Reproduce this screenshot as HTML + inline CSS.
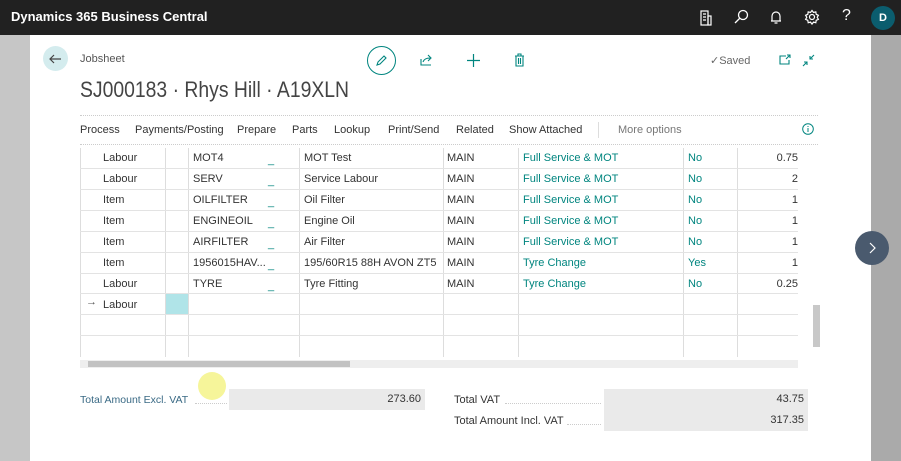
<!DOCTYPE html><html><head><style>
*{margin:0;padding:0;box-sizing:border-box}
body{width:901px;height:461px;overflow:hidden;background:#c6c6c6;font-family:"Segoe UI","Liberation Sans",sans-serif;font-size:11px;color:#333;position:relative}
.top{position:absolute;left:0;top:0;width:901px;height:35px;background:#212121;color:#fff}
.top .t{position:absolute;left:11px;top:9px;font-size:13px;font-weight:bold}
.card{position:absolute;left:30px;top:35px;width:841px;height:426px;background:#fff}
.rg{position:absolute;left:871px;top:35px;width:30px;height:426px;background:#aaa}
.a{position:absolute;white-space:nowrap}
.teal{color:#00857f}
.dot{position:absolute;border-top:1px dotted #ccc}
.vl{position:absolute;width:1px;background:#ddd}
.hl{position:absolute;height:1px;background:#e3e3e3;left:80px;width:718px}
</style></head><body>
<div class="top"><div class="t">Dynamics 365 Business Central</div>
<svg class="a" style="left:699px;top:10px" width="14" height="16" viewBox="0 0 14 16" fill="none" stroke="#fff" stroke-width="1.2"><rect x="2" y="1" width="7" height="14"/><rect x="9" y="6" width="3" height="9"/><path d="M4 4h3M4 7h3M4 10h3"/></svg>
<svg class="a" style="left:733px;top:9px" width="16" height="16" viewBox="0 0 16 16" fill="none" stroke="#fff" stroke-width="1.3"><circle cx="10" cy="6" r="4.5"/><path d="M7 9l-5 5"/></svg>
<svg class="a" style="left:769px;top:10px" width="14" height="15" viewBox="0 0 14 15" fill="none" stroke="#fff" stroke-width="1.2"><path d="M3 11V6a4 4 0 018 0v5H2h10M5.5 13h3"/></svg>
<svg class="a" style="left:804px;top:9px" width="16" height="16" viewBox="0 0 16 16" fill="none" stroke="#fff" stroke-width="1.2"><circle cx="8" cy="8" r="2.5"/><path d="M8 1.5l1.5 2 2.3-.6.4 2.4 2.2 1-1.2 2 1.2 2-2.2 1-.4 2.4-2.3-.6-1.5 2-1.5-2-2.3.6-.4-2.4-2.2-1 1.2-2-1.2-2 2.2-1 .4-2.4 2.3.6z"/></svg>
<div class="a" style="left:842px;top:7px;font-size:16px">?</div>
<div class="a" style="left:871px;top:6px;width:24px;height:24px;border-radius:50%;background:#0b5d6e;color:#fff;font-weight:bold;font-size:11px;text-align:center;line-height:24px">D</div>
</div>
<div class="card"></div><div class="rg"></div>
<div class="a" style="left:43px;top:46px;width:25px;height:25px;border-radius:50%;background:#d4ecee"></div>
<svg class="a" style="left:48px;top:52px" width="14" height="14" viewBox="0 0 14 14" fill="none" stroke="#444" stroke-width="1.2"><path d="M13 7H2M6 3L2 7l4 4"/></svg>
<div class="a" style="left:80px;top:53px;font-size:11px;color:#555">Jobsheet</div>
<div class="a" style="left:80px;top:77px;font-size:22px;color:#444;transform:scaleX(0.88);transform-origin:0 0">SJ000183 · Rhys Hill · A19XLN</div>
<div class="a" style="left:367px;top:46px;width:29px;height:29px;border-radius:50%;border:1px solid #00857f"></div>
<svg class="a" style="left:375px;top:54px" width="13" height="13" viewBox="0 0 13 13" fill="none" stroke="#00857f" stroke-width="1.1"><path d="M2 11l1-3 6-6 2 2-6 6z"/></svg>
<svg class="a" style="left:420px;top:54px" width="13" height="12" viewBox="0 0 13 12" fill="none" stroke="#00857f" stroke-width="1.1"><path d="M1 5v6h10M3 8c1-3 4-4 7-4M8 1l3 3-3 3"/></svg>
<svg class="a" style="left:467px;top:54px" width="13" height="13" viewBox="0 0 13 13" stroke="#00857f" stroke-width="1.2"><path d="M6.5 0v13M0 6.5h13"/></svg>
<svg class="a" style="left:514px;top:53px" width="11" height="14" viewBox="0 0 11 14" fill="none" stroke="#00857f" stroke-width="1.1"><path d="M1 3h9M4 3V1h3v2M2 3v10h7V3M4.5 5v6M6.5 5v6"/></svg>
<div class="a" style="left:710px;top:54px;color:#666">✓Saved</div>
<svg class="a" style="left:779px;top:54px" width="12" height="11" viewBox="0 0 12 11" fill="none" stroke="#00857f" stroke-width="1.1"><path d="M7 2H1v8h9V6M8 1h3v3M11 1L7 5"/></svg>
<svg class="a" style="left:802px;top:54px" width="13" height="13" viewBox="0 0 13 13" fill="none" stroke="#00857f" stroke-width="1.1"><path d="M1 12l4-4M2 8h3v3M12 1L8 5M8 2v3h3"/></svg>
<div class="dot" style="left:80px;top:115px;width:738px"></div>
<div class="a" style="left:80px;top:124px">Process</div>
<div class="a" style="left:135px;top:124px">Payments/Posting</div>
<div class="a" style="left:237px;top:124px">Prepare</div>
<div class="a" style="left:292px;top:124px">Parts</div>
<div class="a" style="left:334px;top:124px">Lookup</div>
<div class="a" style="left:388px;top:124px">Print/Send</div>
<div class="a" style="left:456px;top:124px">Related</div>
<div class="a" style="left:509px;top:124px">Show Attached</div>
<div class="vl" style="left:598px;top:122px;height:16px"></div>
<div class="a" style="left:618px;top:124px;color:#777">More options</div>
<svg class="a" style="left:802px;top:123px" width="12" height="12" viewBox="0 0 12 12" fill="none" stroke="#00857f" stroke-width="1"><circle cx="6" cy="6" r="5.3"/><path d="M6 5v4M6 3v1"/></svg>
<div class="dot" style="left:80px;top:144px;width:738px"></div>
<div class="vl" style="left:80px;top:148px;height:209px"></div>
<div class="vl" style="left:165px;top:148px;height:209px"></div>
<div class="vl" style="left:188px;top:148px;height:209px"></div>
<div class="vl" style="left:299px;top:148px;height:209px"></div>
<div class="vl" style="left:443px;top:148px;height:209px"></div>
<div class="vl" style="left:518px;top:148px;height:209px"></div>
<div class="vl" style="left:683px;top:148px;height:209px"></div>
<div class="vl" style="left:737px;top:148px;height:209px"></div>
<div class="hl" style="top:168px"></div><div class="hl" style="top:189px"></div><div class="hl" style="top:210px"></div><div class="hl" style="top:231px"></div><div class="hl" style="top:252px"></div><div class="hl" style="top:273px"></div><div class="hl" style="top:293px"></div><div class="hl" style="top:314px"></div><div class="hl" style="top:335px"></div>
<div class="a" style="left:166px;top:294px;width:22px;height:20px;background:#b0e4e8"></div>
<div class="a" style="left:86px;top:296px;color:#555">→</div>
<div class="a" style="left:103px;top:148px;line-height:21px">Labour<br>Labour<br>Item<br>Item<br>Item<br>Item<br>Labour<br>Labour</div>
<div class="a" style="left:193px;top:148px;line-height:21px">MOT4<br>SERV<br>OILFILTER<br>ENGINEOIL<br>AIRFILTER<br>1956015HAV...<br>TYRE</div>
<div class="a teal" style="left:268px;top:150px;line-height:21px">_<br>_<br>_<br>_<br>_<br>_<br>_</div>
<div class="a" style="left:304px;top:148px;line-height:21px">MOT Test<br>Service Labour<br>Oil Filter<br>Engine Oil<br>Air Filter<br>195/60R15 88H AVON ZT5<br>Tyre Fitting</div>
<div class="a" style="left:447px;top:148px;line-height:21px">MAIN<br>MAIN<br>MAIN<br>MAIN<br>MAIN<br>MAIN<br>MAIN</div>
<div class="a teal" style="left:523px;top:148px;line-height:21px">Full Service &amp; MOT<br>Full Service &amp; MOT<br>Full Service &amp; MOT<br>Full Service &amp; MOT<br>Full Service &amp; MOT<br>Tyre Change<br>Tyre Change</div>
<div class="a teal" style="left:688px;top:148px;line-height:21px">No<br>No<br>No<br>No<br>No<br>Yes<br>No</div>
<div class="a" style="left:740px;top:148px;width:58px;text-align:right;line-height:21px">0.75<br>2<br>1<br>1<br>1<br>1<br>0.25</div>
<div class="a" style="left:80px;top:360px;width:718px;height:8px;background:#eee"></div>
<div class="a" style="left:88px;top:361px;width:262px;height:6px;background:#c2c2c2"></div>
<div class="a" style="left:813px;top:305px;width:7px;height:42px;background:#c8c8c8"></div>
<div class="a" style="left:855px;top:231px;width:34px;height:34px;border-radius:50%;background:#4a5a6e"></div>
<svg class="a" style="left:866px;top:241px" width="12" height="14" viewBox="0 0 12 14" fill="none" stroke="#fff" stroke-width="1.2"><path d="M4 2l5 5-5 5"/></svg>
<div class="a" style="left:198px;top:372px;width:28px;height:28px;border-radius:50%;background:#f6f59a"></div>
<div class="a" style="left:80px;top:394px;color:#3a6a85;font-size:10.5px">Total Amount Excl. VAT</div>
<div class="dot" style="left:195px;top:403px;width:32px"></div>
<div class="a" style="left:229px;top:389px;width:196px;height:21px;background:#eaeaea;text-align:right;padding-right:4px;line-height:21px">273.60</div>
<div class="a" style="left:454px;top:394px">Total VAT</div>
<div class="a" style="left:454px;top:415px">Total Amount Incl. VAT</div>
<div class="dot" style="left:505px;top:403px;width:96px"></div>
<div class="dot" style="left:567px;top:424px;width:34px"></div>
<div class="a" style="left:604px;top:389px;width:204px;height:42px;background:#eaeaea;text-align:right;padding-right:4px;line-height:21px">43.75<br>317.35</div>
</body></html>
